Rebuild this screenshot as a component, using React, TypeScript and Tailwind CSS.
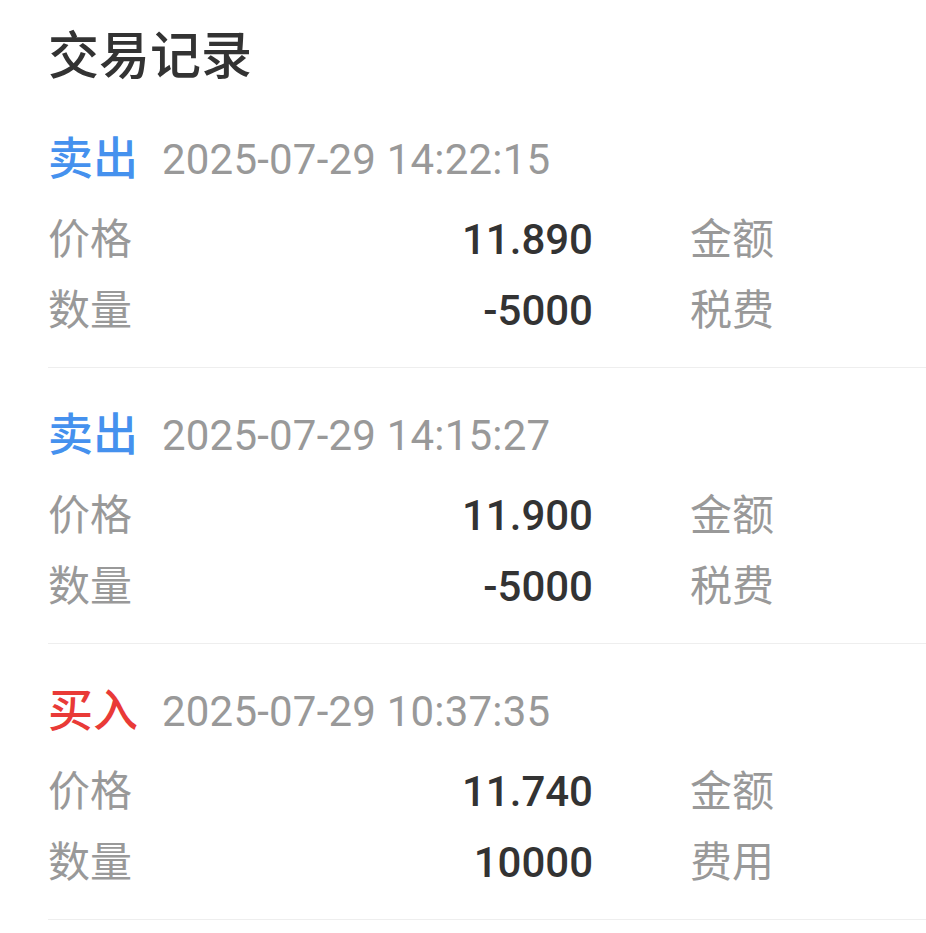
type Trade = {
  side: "卖出" | "买入";
  time: string;
  price: string;
  qty: string;
  feeLabel: string;
};

const trades: Trade[] = [
  { side: "卖出", time: "2025-07-29 14:22:15", price: "11.890", qty: "-5000", feeLabel: "税费" },
  { side: "卖出", time: "2025-07-29 14:15:27", price: "11.900", qty: "-5000", feeLabel: "税费" },
  { side: "买入", time: "2025-07-29 10:37:35", price: "11.740", qty: "10000", feeLabel: "费用" },
];

const font = { fontFamily: "Roboto, 'Noto Sans CJK SC', sans-serif" };

function Row({ label, value, right }: { label: string; value: string; right: string }) {
  return (
    <div className="flex items-center h-[71px] text-[42px] leading-[71px]">
      <div className="flex w-[545px] justify-between">
        <span className="text-[#999]">{label}</span>
        <span className="text-[#333] font-medium">{value}</span>
      </div>
      <span className="ml-[97px] text-[#999]">{right}</span>
    </div>
  );
}

function TradeItem({ t }: { t: Trade }) {
  const sell = t.side === "卖出";
  return (
    <div className="border-b border-[#eeeeee] pt-[38px] pb-[21px]">
      <div className="flex items-center h-[60px] leading-[60px]">
        <span
          className={
            sell
              ? "text-[45px] text-[#4591ee] font-medium"
              : "text-[45px] text-[#e93a37] font-medium"
          }
        >
          {t.side}
        </span>
        <span className="ml-[24px] text-[42px] tracking-[0.2px] text-[#999]">{t.time}</span>
      </div>
      <div className="mt-[14px]">
        <Row label="价格" value={t.price} right="金额" />
        <Row label="数量" value={t.qty} right={t.feeLabel} />
      </div>
    </div>
  );
}

export default function App() {
  return (
    <div className="min-h-[933px] w-[926px] bg-white pl-[48px] overflow-hidden" style={font}>
      <h1 className="pt-[22px] h-[92px] text-[51px] leading-[70px] font-medium text-[#333]">
        交易记录
      </h1>
      {trades.map((t, i) => (
        <TradeItem key={i} t={t} />
      ))}
    </div>
  );
}
